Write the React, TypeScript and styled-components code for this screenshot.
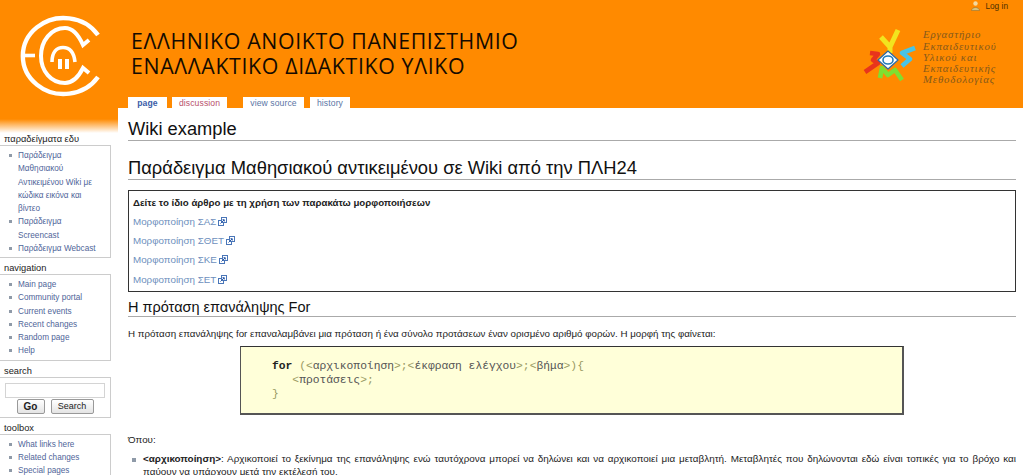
import React from 'react';
import styled, { createGlobalStyle } from 'styled-components';

const ORANGE = '#ff8a00';

const GlobalStyle = createGlobalStyle`
  html, body {
    margin: 0;
    height: 475px;
    overflow: hidden;
    background: #fff;
    font-family: "Liberation Sans", Arial, sans-serif;
  }
`;

const Header = styled.header`
  height: 108px;
  background: ${ORANGE};
  display: flex;
`;

const LogoCell = styled.div`
  width: 118px;
  flex: none;
  display: flex;
  padding-top: 12px;
  padding-left: 15px;
  box-sizing: border-box;
`;

const HeaderMiddle = styled.div`
  flex: 1;
  padding-left: 10px;
  display: flex;
  flex-direction: column;
  justify-content: space-between;
`;

const SiteTitle = styled.div`
  padding: 28px 0 0 3px;
  font-family: "Open Sans", "DejaVu Sans", sans-serif;
  font-size: 21.3px;
  line-height: 25px;
  letter-spacing: 0.65px;
  color: #140a00;
`;

const Tabs = styled.ul`
  list-style: none;
  margin: 0;
  padding: 0;
  display: flex;
  height: 11px;
`;

const Tab = styled.li<{ $gap?: number; $color: string; $width: number; $bold?: boolean }>`
  width: ${p => p.$width}px;
  margin-left: ${p => p.$gap ?? 0}px;
  background: #fff;
  color: ${p => p.$color};
  font-size: 8.6px;
  font-weight: ${p => (p.$bold ? 700 : 400)};
  line-height: 12px;
  text-align: center;
  letter-spacing: 0.1px;
`;

const HeaderRight = styled.div`
  width: 163px;
  flex: none;
  display: flex;
  flex-direction: column;
`;

const LoginRow = styled.div`
  display: flex;
  justify-content: flex-end;
  align-items: center;
  gap: 5px;
  height: 11px;
  padding: 0 15px 0 0;
  font-size: 8.3px;
  color: #4a3000;
`;

const LabBlock = styled.div`
  display: flex;
  align-items: center;
  margin-top: 14px;
  gap: 3px;
`;

const LabText = styled.div`
  font-family: "Liberation Serif", serif;
  font-style: italic;
  font-size: 10.8px;
  line-height: 11.25px;
  letter-spacing: 0.85px;
  color: #85591c;
`;

const Columns = styled.div`
  display: flex;
`;

const Sidebar = styled.nav`
  width: 118px;
  flex: none;
  padding-top: 25px;
  box-sizing: border-box;
  background: linear-gradient(${ORANGE} 11px, #fff 25px);
`;

const PortletTitle = styled.h5`
  margin: 0;
  padding-left: 4px;
  font-size: 9.3px;
  font-weight: 400;
  line-height: 12px;
  color: #222;
`;

const PortletBox = styled.div`
  margin: 0 7px 4px -1px;
  border: 1px solid #ccc;
  background: #fff;
  padding: 3px 0 2px;
`;

const PortletList = styled.ul`
  list-style: none;
  margin: 0;
  padding: 0 10px 0 9px;
`;

const PortletItem = styled.li`
  display: flex;
  gap: 6px;
  font-size: 8.2px;
  line-height: 13.25px;
  color: #4f6599;
  &::before {
    content: '';
    flex: none;
    width: 3px;
    height: 3px;
    margin-top: 5px;
    background: #8f9aa8;
  }
`;

const SearchBox = styled.div`
  margin: 0 7px 4px -1px;
  border: 1px solid #ccc;
  padding: 5px 5px 3px;
  height: 31px;
  display: flex;
  flex-direction: column;
  align-items: stretch;
`;

const SearchInput = styled.div`
  height: 13px;
  border: 1px solid #d4d4d4;
`;

const SearchButtons = styled.div`
  display: flex;
  justify-content: center;
  gap: 6px;
  margin-top: 1px;
`;

const SearchButton = styled.button<{ $bold?: boolean; $width: number }>`
  width: ${p => p.$width}px;
  height: 15px;
  padding: 0;
  font-family: inherit;
  font-size: ${p => (p.$bold ? 10 : 9)}px;
  font-weight: ${p => (p.$bold ? 700 : 400)};
  color: #222;
  background: linear-gradient(#fff, #e4e4e4);
  border: 1px solid #999;
  border-radius: 2px;
`;

const Content = styled.main`
  flex: 1;
  background: #fff;
  padding: 0 7px 0 10px;
  color: #222;
  font-size: 10px;
`;

const PageTitle = styled.h1`
  margin: 0;
  padding-top: 9px;
  height: 23px;
  font-size: 18.3px;
  line-height: 23px;
  font-weight: 400;
  color: #111;
  border-bottom: 1px solid #aaa;
`;

const SectionTitle = styled.h1`
  margin: 14px 0 10px;
  padding-top: 1px;
  height: 23px;
  font-size: 18.35px;
  line-height: 24px;
  font-weight: 400;
  color: #111;
  border-bottom: 1px solid #aaa;
`;

const NoticeBox = styled.div`
  height: 100px;
  border: 1px solid #333;
  padding: 0 4px;
  display: flex;
  flex-direction: column;
`;

const NoticeHead = styled.div`
  height: 21px;
  font-weight: 700;
  font-size: 9.7px;
  line-height: 23px;
  color: #222;
`;

const NoticeLink = styled.a`
  display: flex;
  align-items: center;
  gap: 2px;
  height: 19.2px;
  font-size: 9.8px;
  color: #6d8fbd;
`;

const SubTitle = styled.h2`
  margin: 6px 0 10px;
  height: 18px;
  font-size: 14.5px;
  line-height: 18px;
  font-weight: 400;
  color: #111;
  border-bottom: 1px solid #aaa;
`;

const Para = styled.p`
  margin: 0;
  font-size: 9.75px;
  line-height: 14px;
  color: #222;
`;

const CodeBox = styled.pre`
  margin: 5px 112px 0 112px;
  height: 69px;
  box-sizing: border-box;
  padding: 12px 0 0 31px;
  background: #ffffd9;
  border: 1px solid #444;
  border-width: 1px 2px 2px 1px;
  border-color: #333 #555 #555 #555;
  font-family: "Liberation Mono", monospace;
  font-size: 11.3px;
  line-height: 14px;
  color: #555;
`;

const Keyword = styled.b`
  color: #222;
`;

const Punct = styled.span`
  color: #9a9a62;
`;

const Where = styled(Para)`
  margin-top: 18px;
`;

const ArticleList = styled.ul`
  list-style: none;
  margin: 6px 0 0;
  padding: 0;
`;

const ArticleItem = styled.li`
  display: flex;
  gap: 7px;
  padding-left: 4px;
  font-size: 9.9px;
  line-height: 12.5px;
  &::before {
    content: '';
    flex: none;
    width: 4px;
    height: 4px;
    margin-top: 5px;
    background: #8f9aa8;
  }
`;

const ItemText = styled.div`
  flex: 1;
  text-align: justify;
`;

const ExternalIcon = () => (
  <svg width="9" height="9" viewBox="0 0 9 9" fill="none">
    <rect x="0.5" y="3.5" width="5" height="5" stroke="#4a76b8" />
    <rect x="3.5" y="0.5" width="5" height="5" fill="#fff" stroke="#4a76b8" />
    <path d="M2.5 6.5 L6 3 M4.5 2.7 H6.3 V4.5" stroke="#2a5aa8" />
  </svg>
);

const UserIcon = () => (
  <svg width="9" height="10" viewBox="0 0 9 10">
    <circle cx="4.5" cy="2.5" r="2.2" fill="#f3d9a0" />
    <path d="M0.5 9.5 C1 5.5 8 5.5 8.5 9.5 Z" fill="#d9c27a" stroke="#8a6a30" strokeWidth="0.5" />
  </svg>
);

const SiteLogo = () => (
  <svg width="90" height="90" viewBox="0 0 90 90" fill="none" stroke="#fff">
    <path d="M83 23 A41 38 0 1 0 83 65" strokeWidth="4.4" />
    <path d="M9 43.5 H20" strokeWidth="3.6" />
    <path d="M74 28 L68 33 C64 24 58 16 50 16 C36 16 26 29 26 44 C26 59 36 71 50 71 C58 71 64 64 68 56 L74 61" strokeWidth="4" />
    <path d="M37 50 C37 40 42 35.5 48 35.5 C55 35.5 59 41 60 50" strokeWidth="3.6" />
    <rect x="43" y="47" width="4" height="10" fill="#fff" stroke="none" />
    <rect x="50" y="47" width="4" height="10" fill="#fff" stroke="none" />
  </svg>
);

const LabLogo = () => (
  <svg width="60" height="65" viewBox="0 0 60 65" fill="none" strokeLinejoin="round">
    <path d="M38 5 L30 22 L21 12 M30 22 V28" stroke="#f2e41e" strokeWidth="5" />
    <path d="M10 28 L18 29 L13 35 L18 38 L5 47" stroke="#e8341c" strokeWidth="4.6" />
    <path d="M55 23 L42 28 L50 34 L42 41" stroke="#48c4e6" strokeWidth="4.6" />
    <path d="M20 53 L22 43 L28 50 L35 45 L42 55" stroke="#7fdf30" strokeWidth="4.6" />
    <path d="M28 26 L38 35 L28 44 L18 35 Z" fill="#fff" stroke="#2a6aa8" strokeWidth="1.2" />
    <ellipse cx="28" cy="35" rx="5" ry="4" stroke="#1f7ab8" strokeWidth="1.6" />
  </svg>
);

const examples = [
  'Παράδειγμα Μαθησιακού Αντικειμένου Wiki με κώδικα εικόνα και βίντεο',
  'Παράδειγμα Screencast',
  'Παράδειγμα Webcast',
];
const navigation = ['Main page', 'Community portal', 'Current events', 'Recent changes', 'Random page', 'Help'];
const toolbox = ['What links here', 'Related changes', 'Special pages'];
const formats = ['ΣΑΣ', 'ΣΘΕΤ', 'ΣΚΕ', 'ΣΕΤ'];

const App = () => (
  <>
    <GlobalStyle />
    <Header>
      <LogoCell>
        <SiteLogo />
      </LogoCell>
      <HeaderMiddle>
        <SiteTitle>
          ΕΛΛΗΝΙΚΟ ΑΝΟΙΚΤΟ ΠΑΝΕΠΙΣΤΗΜΙΟ
          <br />
          ΕΝΑΛΛΑΚΤΙΚΟ ΔΙΔΑΚΤΙΚΟ ΥΛΙΚΟ
        </SiteTitle>
        <Tabs>
          <Tab $width={39} $color="#3a5ca8" $bold>page</Tab>
          <Tab $width={55} $gap={5} $color="#b8506a">discussion</Tab>
          <Tab $width={61} $gap={16} $color="#5a75a5">view source</Tab>
          <Tab $width={40} $gap={6} $color="#5a75a5">history</Tab>
        </Tabs>
      </HeaderMiddle>
      <HeaderRight>
        <LoginRow>
          <UserIcon />
          Log in
        </LoginRow>
        <LabBlock>
          <LabLogo />
          <LabText>
            Εργαστήριο
            <br />
            Εκπαιδευτικού
            <br />
            Υλικού και
            <br />
            Εκπαιδευτικής
            <br />
            Μεθοδολογίας
          </LabText>
        </LabBlock>
      </HeaderRight>
    </Header>
    <Columns>
      <Sidebar>
        <PortletTitle>παραδείγματα εδυ</PortletTitle>
        <PortletBox>
          <PortletList>
            {examples.map(item => (
              <PortletItem key={item}>
                <span>{item}</span>
              </PortletItem>
            ))}
          </PortletList>
        </PortletBox>
        <PortletTitle>navigation</PortletTitle>
        <PortletBox>
          <PortletList>
            {navigation.map(item => (
              <PortletItem key={item}>
                <span>{item}</span>
              </PortletItem>
            ))}
          </PortletList>
        </PortletBox>
        <PortletTitle>search</PortletTitle>
        <SearchBox>
          <SearchInput />
          <SearchButtons>
            <SearchButton $bold $width={28}>Go</SearchButton>
            <SearchButton $width={43}>Search</SearchButton>
          </SearchButtons>
        </SearchBox>
        <PortletTitle>toolbox</PortletTitle>
        <PortletBox>
          <PortletList>
            {toolbox.map(item => (
              <PortletItem key={item}>
                <span>{item}</span>
              </PortletItem>
            ))}
          </PortletList>
        </PortletBox>
      </Sidebar>
      <Content>
        <PageTitle>Wiki example</PageTitle>
        <SectionTitle>Παράδειγμα Μαθησιακού αντικειμένου σε Wiki από την ΠΛΗ24</SectionTitle>
        <NoticeBox>
          <NoticeHead>Δείτε το ίδιο άρθρο με τη χρήση των παρακάτω μορφοποιήσεων</NoticeHead>
          {formats.map(name => (
            <NoticeLink key={name}>
              Μορφοποίηση {name}
              <ExternalIcon />
            </NoticeLink>
          ))}
        </NoticeBox>
        <SubTitle>Η πρόταση επανάληψης For</SubTitle>
        <Para>
          Η πρόταση επανάληψης for επαναλαμβάνει μια πρόταση ή ένα σύνολο προτάσεων έναν ορισμένο αριθμό φορών. Η μορφή της φαίνεται:
        </Para>
        <CodeBox>
          <Keyword>for</Keyword> <Punct>(&lt;</Punct>αρχικοποίηση<Punct>&gt;;&lt;</Punct>έκφραση ελέγχου<Punct>&gt;;&lt;</Punct>βήμα<Punct>&gt;){'{'}</Punct>
          {'\n'}   <Punct>&lt;</Punct>προτάσεις<Punct>&gt;;</Punct>
          {'\n'}<Punct>{'}'}</Punct>
        </CodeBox>
        <Where>Όπου:</Where>
        <ArticleList>
          <ArticleItem>
            <ItemText>
              <b>&lt;αρχικοποίηση&gt;</b>: Αρχικοποιεί το ξεκίνημα της επανάληψης ενώ ταυτόχρονα μπορεί να δηλώνει και να αρχικοποιεί μια μεταβλητή. Μεταβλητές που δηλώνονται εδώ είναι τοπικές για το βρόχο και παύουν να υπάρχουν μετά την εκτέλεσή του.
            </ItemText>
          </ArticleItem>
        </ArticleList>
      </Content>
    </Columns>
  </>
);

export default App;
